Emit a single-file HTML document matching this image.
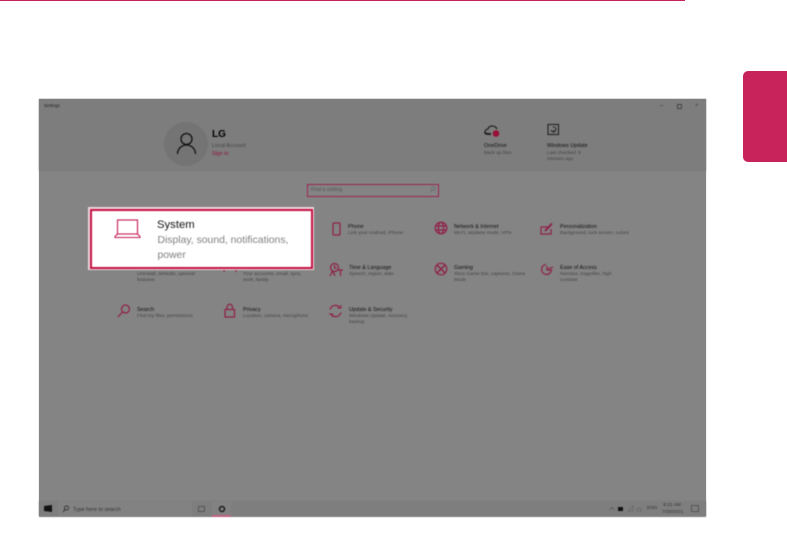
<!DOCTYPE html>
<html><head><meta charset="utf-8"><style>
html,body{margin:0;padding:0;background:#fff;width:787px;height:533px;overflow:hidden;font-family:"Liberation Sans",sans-serif}
.a{position:absolute;white-space:nowrap}
#win{position:absolute;left:39px;top:99px;width:667px;height:417px;background:#848484;box-shadow:0 0 1px #bbb;overflow:hidden}
.blur{position:absolute;left:0;top:0;width:787px;height:533px;filter:blur(.5px)}
.t{position:absolute;white-space:nowrap;font-size:5.400px;line-height:6px;color:#111}
.s{position:absolute;white-space:nowrap;font-size:4.850px;line-height:6.200px;color:#444}
.r .t,.r .s{margin-top:1px}
svg{position:absolute;overflow:visible}
.i{fill:none;stroke:#8f1f47;stroke-width:1.200}
</style></head><body>
<div class="a" style="left:0;top:0;width:685px;height:1px;background:#c9235c"></div>
<div class="a" style="left:743px;top:71px;width:44px;height:91px;background:#c9235c;border-radius:5px 0 0 5px"></div>
<div id="win"></div>
<div class="blur">
<div class="a" style="left:39px;top:99px;width:667px;height:72px;background:#7d7d7d"></div>
<div class="a" style="left:39px;top:501px;width:667px;height:16px;background:#7e7e7e"></div>
<div class="t" style="left:44px;top:103px;font-size:4.400px;color:#222">Settings</div>
<div class="a" style="left:660px;top:105px;width:3px;height:.7px;background:#555"></div>
<div class="a" style="left:677px;top:104px;width:3px;height:3px;border:.7px solid #444"></div>
<div class="a" style="left:695px;top:101px;font-size:6px;color:#444;line-height:10px">×</div>
<div class="a" style="left:164px;top:122px;width:44px;height:44px;border-radius:50%;background:#747474"></div>
<svg style="left:176px;top:132px" width="21" height="24" viewBox="0 0 21 24"><circle cx="10.500" cy="7" r="5.500" fill="none" stroke="#111" stroke-width="1.300"/><path d="M1.500 22c0-5 4-9 9-9s9 4 9 9" fill="none" stroke="#111" stroke-width="1.300"/></svg>
<div class="t" style="left:212px;top:129px;font-size:10px;line-height:12px;font-weight:bold;color:#000">LG</div>
<div class="s" style="left:212px;top:143px;font-size:5.400px">Local Account</div>
<div class="s" style="left:212px;top:151px;font-size:5.400px;color:#8f1040">Sign in</div>
<svg style="left:484px;top:123px" width="18" height="16" viewBox="0 0 18 16"><path d="M1 9c0-2 2-3 3-3 1-4 7-4 9 0" fill="none" stroke="#222" stroke-width="1.300"/><path d="M1 9c0 2 2 2 6 2" fill="none" stroke="#222" stroke-width="2"/><circle cx="12" cy="10.500" r="3.300" fill="#98103a"/></svg>
<div class="t" style="left:484px;top:143px">OneDrive</div>
<div class="s" style="left:484px;top:151px">Back up files</div>
<svg style="left:547px;top:123px" width="13" height="13" viewBox="0 0 13 13"><rect x="1" y="1.500" width="10.500" height="10" fill="none" stroke="#222" stroke-width="1.100"/><path d="M4 7a2.500 2.500 0 1 0 2-3M6 9l1-2" fill="none" stroke="#222"/></svg>
<div class="t" style="left:547px;top:143px">Windows Update</div>
<div class="s" style="left:547px;top:151px">Last checked: 6<br>minutes ago</div>
<div class="a" style="left:307px;top:184px;width:130px;height:11px;border:1px solid #9a2450"></div>
<div class="s" style="left:311px;top:187px;font-size:5.200px;color:#555">Find a setting</div>
<svg style="left:430px;top:186px" width="6" height="7" viewBox="0 0 6 7"><circle cx="3.500" cy="2.500" r="1.800" fill="none" stroke="#666" stroke-width=".7"/><path d="M2 4L.5 6" stroke="#666" stroke-width=".7"/></svg>

<div class="r">
<svg style="left:332px;top:222px" width="10" height="14" viewBox="0 0 10 14"><rect x="1" y="1" width="7" height="12" rx="1" class="i"/></svg>
<div class="t" style="left:348px;top:223px">Phone</div><div class="s" style="left:348px;top:230px">Link your Android, iPhone</div>
<svg style="left:434px;top:221px" width="14" height="14" viewBox="0 0 14 14"><g class="i"><circle cx="7" cy="7" r="5.800"/><ellipse cx="7" cy="7" rx="2.600" ry="5.800"/><path d="M1 5h12M1 9h12"/></g></svg>
<div class="t" style="left:454px;top:223px">Network &amp; Internet</div><div class="s" style="left:454px;top:230px">Wi-Fi, airplane mode, VPN</div>
<svg style="left:540px;top:222px" width="14" height="14" viewBox="0 0 14 14"><g class="i"><path d="M1 5h7M1 5v7h10V7"/><path d="M5 9l7-7.500" stroke-width="2"/></g></svg>
<div class="t" style="left:560px;top:223px">Personalization</div><div class="s" style="left:560px;top:230px">Background, lock screen, colors</div>

<svg style="left:329px;top:262px" width="14" height="15" viewBox="0 0 14 15"><g class="i"><circle cx="5.500" cy="5.500" r="4"/><path d="M5.500 3v3h2"/><path d="M1 14l2.500-5 2.500 5M9 8h5M11.500 8v6" /></g></svg>
<div class="t" style="left:349px;top:264px">Time &amp; Language</div><div class="s" style="left:349px;top:271px">Speech, region, date</div>
<svg style="left:434px;top:262px" width="14" height="14" viewBox="0 0 14 14"><g class="i"><circle cx="7" cy="7" r="5.800"/><path d="M3 3l8 8M11 3l-8 8" stroke-width="1.500"/></g></svg>
<div class="t" style="left:454px;top:264px">Gaming</div><div class="s" style="left:454px;top:271px">Xbox Game Bar, captures, Game<br>Mode</div>
<svg style="left:540px;top:262px" width="14" height="14" viewBox="0 0 14 14"><g class="i"><path d="M6 2.500A5 5 0 1 0 11.500 8H7V4"/><path d="M8 7l5-2"/></g></svg>
<div class="t" style="left:560px;top:264px">Ease of Access</div><div class="s" style="left:560px;top:271px">Narrator, magnifier, high<br>contrast</div>

<svg style="left:117px;top:262px" width="14" height="10" viewBox="0 0 14 10"><path d="M1 6h3M6 6h7M1 2h3" class="i"/></svg>
<div class="s" style="left:137px;top:271px">Uninstall, defaults, optional<br>features</div>
<svg style="left:223px;top:266px" width="14" height="6" viewBox="0 0 14 6"><path d="M1 6a6 6 0 0 1 12 0" class="i"/></svg>
<div class="s" style="left:243px;top:271px">Your accounts, email, sync,<br>work, family</div>

<svg style="left:117px;top:304px" width="15" height="14" viewBox="0 0 15 14"><g class="i"><circle cx="8.500" cy="5" r="4"/><path d="M5.500 8L1 13"/></g></svg>
<div class="t" style="left:137px;top:306px">Search</div><div class="s" style="left:137px;top:313px">Find my files, permissions</div>
<svg style="left:224px;top:303px" width="12" height="15" viewBox="0 0 12 15"><g class="i"><rect x="1" y="6.500" width="9.500" height="7.500"/><path d="M3 6.500V4a2.700 2.700 0 0 1 5.500 0v2.500"/></g></svg>
<div class="t" style="left:243px;top:306px">Privacy</div><div class="s" style="left:243px;top:313px">Location, camera, microphone</div>
<svg style="left:328px;top:304px" width="15" height="14" viewBox="0 0 15 14"><g class="i"><path d="M2 5.500A5.500 5.500 0 0 1 12 4M13 8.500A5.500 5.500 0 0 1 3 10"/><path d="M9.500 4h3.500V1M1 10h3.500v3" stroke-width="1"/></g></svg>
<div class="t" style="left:349px;top:306px">Update &amp; Security</div><div class="s" style="left:349px;top:313px">Windows Update, recovery,<br>backup</div>
</div>

<div class="a" style="left:88px;top:207px;width:225.500px;height:63px;background:#efd5de"></div>
<div class="a" style="left:89.500px;top:208.500px;width:219px;height:56.500px;background:#fff;border:2px solid #c4103f"></div>
<svg style="left:114px;top:219px" width="28" height="20" viewBox="0 0 28 20"><g fill="none" stroke="#c41a55" stroke-width="1.100"><rect x="3.500" y="1" width="20" height="14"/><path d="M3.500 15L1 17.500V18.500H26V17.500L23.500 15"/></g></svg>
<div class="a" style="left:157px;top:218px;font-size:11.300px;line-height:14px;color:#111">System</div>
<div class="a" style="left:157.500px;top:234px;font-size:10.400px;line-height:14.500px;color:#808080">Display, sound, notifications,<br>power</div>

<svg style="left:44px;top:505px" width="8" height="7" viewBox="0 0 8 7"><path d="M0 1L8 0V7L0 6Z" fill="#111"/></svg>
<div class="a" style="left:58px;top:502px;width:134px;height:14px;background:#828282"></div>
<svg style="left:62px;top:505px" width="7" height="8" viewBox="0 0 7 8"><circle cx="4.500" cy="3" r="2" fill="none" stroke="#222" stroke-width=".8"/><path d="M3 4.500L1 7" stroke="#222" stroke-width=".8"/></svg>
<div class="s" style="left:73px;top:506.500px;font-size:5.400px;color:#333">Type here to search</div>
<div class="a" style="left:198px;top:506px;width:5px;height:4px;border:.8px solid #555"></div>
<div class="a" style="left:212px;top:502px;width:19px;height:14px;background:#828282"></div>
<div class="a" style="left:212px;top:515px;width:19px;height:1.500px;background:#c06080"></div>
<svg style="left:218px;top:505px" width="8" height="8" viewBox="0 0 8 8"><circle cx="4" cy="4" r="2.500" fill="none" stroke="#1a1a1a" stroke-width="1.500"/></svg>
<svg style="left:609px;top:506px" width="6" height="5" viewBox="0 0 6 5"><path d="M.5 4L3 1.500 5.500 4" fill="none" stroke="#555" stroke-width=".7"/></svg>
<div class="a" style="left:618px;top:507px;width:5px;height:3.500px;background:#111"></div>
<svg style="left:628px;top:505px" width="16" height="7" viewBox="0 0 16 7"><path d="M0 6L5 1V6ZM9 3h4v3h-4z" fill="none" stroke="#666" stroke-width=".7"/></svg>
<div class="s" style="left:647px;top:506px;font-size:4.800px;color:#333">ENG</div>
<div class="s" style="left:662px;top:503px;width:20px;text-align:center;font-size:4.800px;line-height:6.500px;color:#333">8:21 AM<br>7/20/2021</div>
<div class="a" style="left:691px;top:505px;width:6px;height:5px;border:.7px solid #555"></div>
</div>
</body></html>
